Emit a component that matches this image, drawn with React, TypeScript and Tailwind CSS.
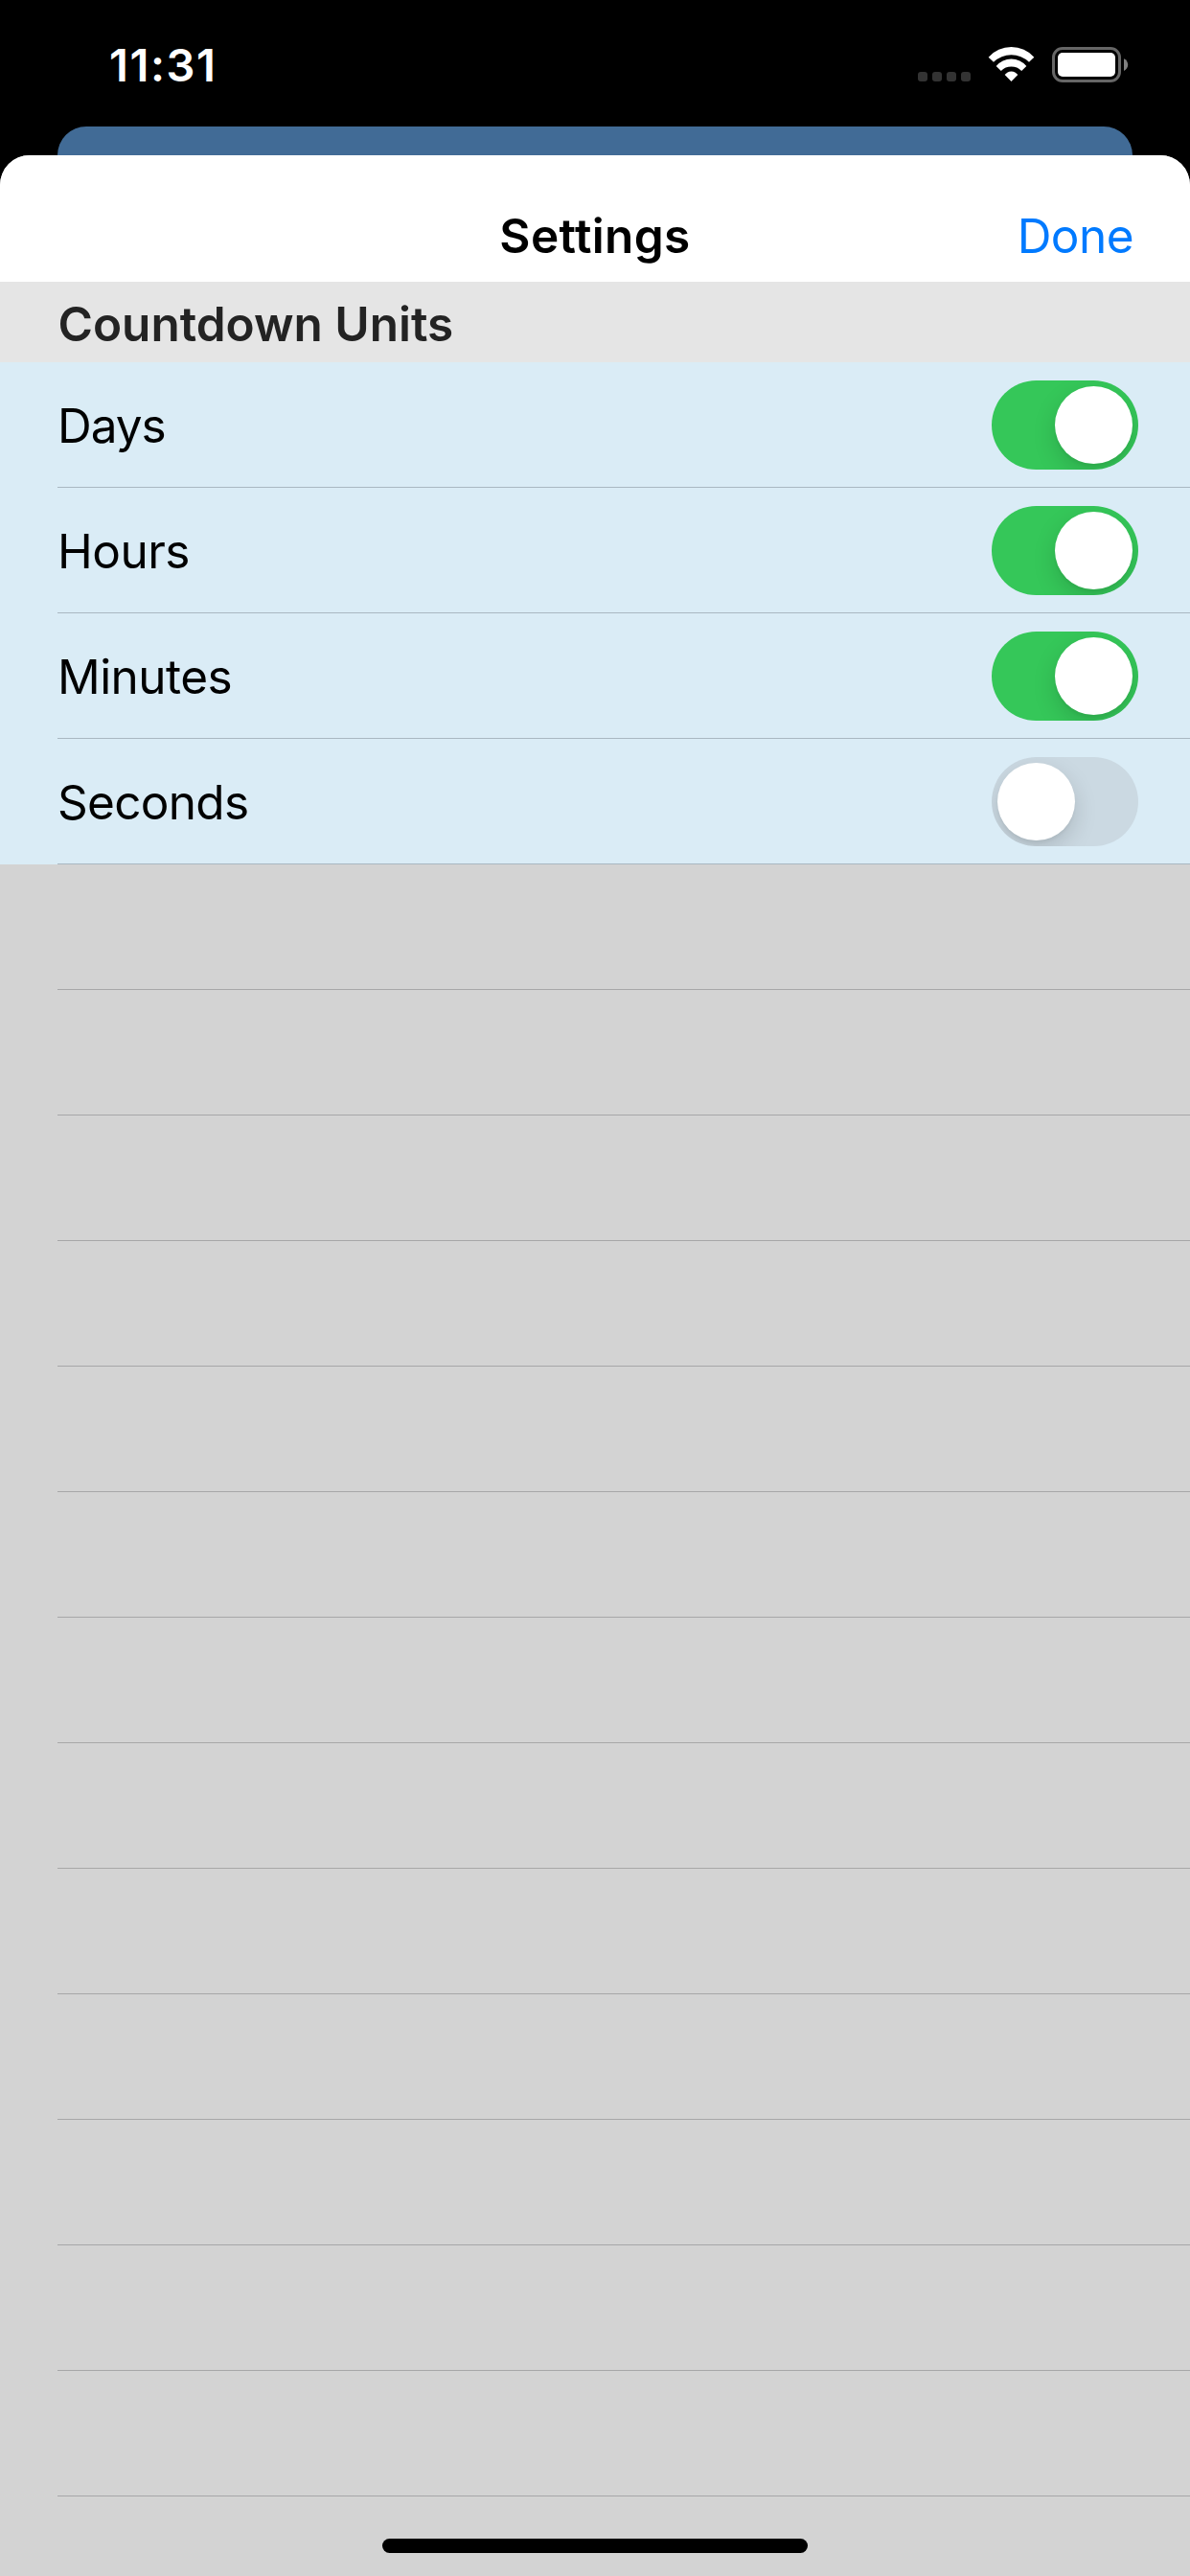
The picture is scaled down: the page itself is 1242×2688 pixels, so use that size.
import { useState } from "react";

function StatusBar() {
  return (
    <div className="flex h-[132px] items-start justify-between pl-[114px] pr-[64px]">
      <time className="mt-[39px] text-[47px] leading-[57px] font-semibold tracking-[1.6px] text-white">11:31</time>
      <div className="mt-[49px] flex h-[37px] items-start">
        <div className="mt-[26px] flex gap-[5px]">
          {[0, 1, 2, 3].map((dot) => (
            <span key={dot} className="h-[10px] w-[10px] rounded-[3px] bg-[#333333]" />
          ))}
        </div>
        <svg className="ml-[18px] h-[37px] w-[50px]" viewBox="303 87 150 111" fill="#fff" aria-label="Wi-Fi">
          <path d="M305 119A96 96 0 0 1 448 119L432 134A80 80 0 0 0 321 134Z" />
          <path d="M329 147A62 62 0 0 1 424 147L408.500 162A45 45 0 0 0 344.500 162Z" />
          <path d="M356 174A25 25 0 0 1 397 174L376.500 195Z" />
        </svg>
        <svg className="ml-[17px] h-[37px] w-[80px]" viewBox="0 0 80 37" aria-label="Battery">
          <rect x="1.500" y="1.500" width="69" height="34" rx="9.500" fill="none" stroke="#666666" strokeWidth="3" />
          <rect x="6" y="6" width="60" height="25" rx="5" fill="#fff" />
          <path d="M75 12.200C77.600 13.400 79.200 15.800 79.200 18.600C79.200 21.400 77.600 23.800 75 25Z" fill="#808080" />
        </svg>
      </div>
    </div>
  );
}

function Toggle({ on, onChange, label }: { on: boolean; onChange: () => void; label: string }) {
  return (
    <button
      type="button"
      role="switch"
      aria-checked={on}
      aria-label={label}
      onClick={onChange}
      className={`mt-[19px] flex h-[93px] w-[153px] overflow-hidden rounded-full p-[6px] ${on ? "justify-end bg-[#35c759]" : "justify-start bg-[#cbd9e2]"}`}
    >
      <span className="h-[81px] w-[81px] rounded-full bg-white shadow-[0_9px_24px_rgba(0,0,0,0.15),0_3px_3px_rgba(0,0,0,0.04)]" />
    </button>
  );
}

const units = [
  { name: "Days", tracking: "tracking-[-1px]" },
  { name: "Hours", tracking: "tracking-[-0.5px]" },
  { name: "Minutes", tracking: "tracking-[-0.55px]" },
  { name: "Seconds", tracking: "tracking-[-0.7px]" },
];

export default function App() {
  const [enabled, setEnabled] = useState<Record<string, boolean>>({
    Days: true,
    Hours: true,
    Minutes: true,
    Seconds: false,
  });

  return (
    <div className="relative flex h-[2688px] w-[1242px] flex-col overflow-hidden bg-black font-['Inter',sans-serif] text-[49.5px] leading-[60px]">
      <StatusBar />
      <div className="mx-[60px] h-[30px] shrink-0 rounded-t-[30px] bg-[#416b96]" />
      <main className="flex flex-1 flex-col overflow-hidden rounded-t-[31px] bg-[#d3d3d3]">
        <header className="grid h-[132px] shrink-0 grid-cols-[1fr_auto_1fr] bg-white pt-[54px]">
          <span />
          <h1 className="font-semibold tracking-[0.38px] text-black">Settings</h1>
          <button type="button" className="mr-[59px] h-[60px] justify-self-end tracking-[-0.55px] text-[#007aff]">
            Done
          </button>
        </header>
        <h2 className="h-[84px] shrink-0 bg-[#e5e5e5] pt-[14px] pl-[60.5px] font-semibold text-[#232323]">
          Countdown Units
        </h2>
        <ul className="shrink-0 bg-[#daecf6]">
          {units.map(({ name, tracking }) => (
            <li key={name} className="ml-[60px] flex h-[131px] items-start justify-between border-b border-[#a9b8c2] pr-[54px]">
              <span className={`mt-[36px] text-black ${tracking}`}>{name}</span>
              <Toggle
                label={name}
                on={enabled[name]}
                onChange={() => setEnabled((prev) => ({ ...prev, [name]: !prev[name] }))}
              />
            </li>
          ))}
        </ul>
        <div>
          {Array.from({ length: 13 }, (_, row) => (
            <div key={row} className="ml-[60px] h-[131px] border-b border-[#a7a7a8]" />
          ))}
        </div>
      </main>
      <div className="absolute bottom-[24px] left-[399px] h-[15px] w-[444px] rounded-full bg-black" />
    </div>
  );
}
